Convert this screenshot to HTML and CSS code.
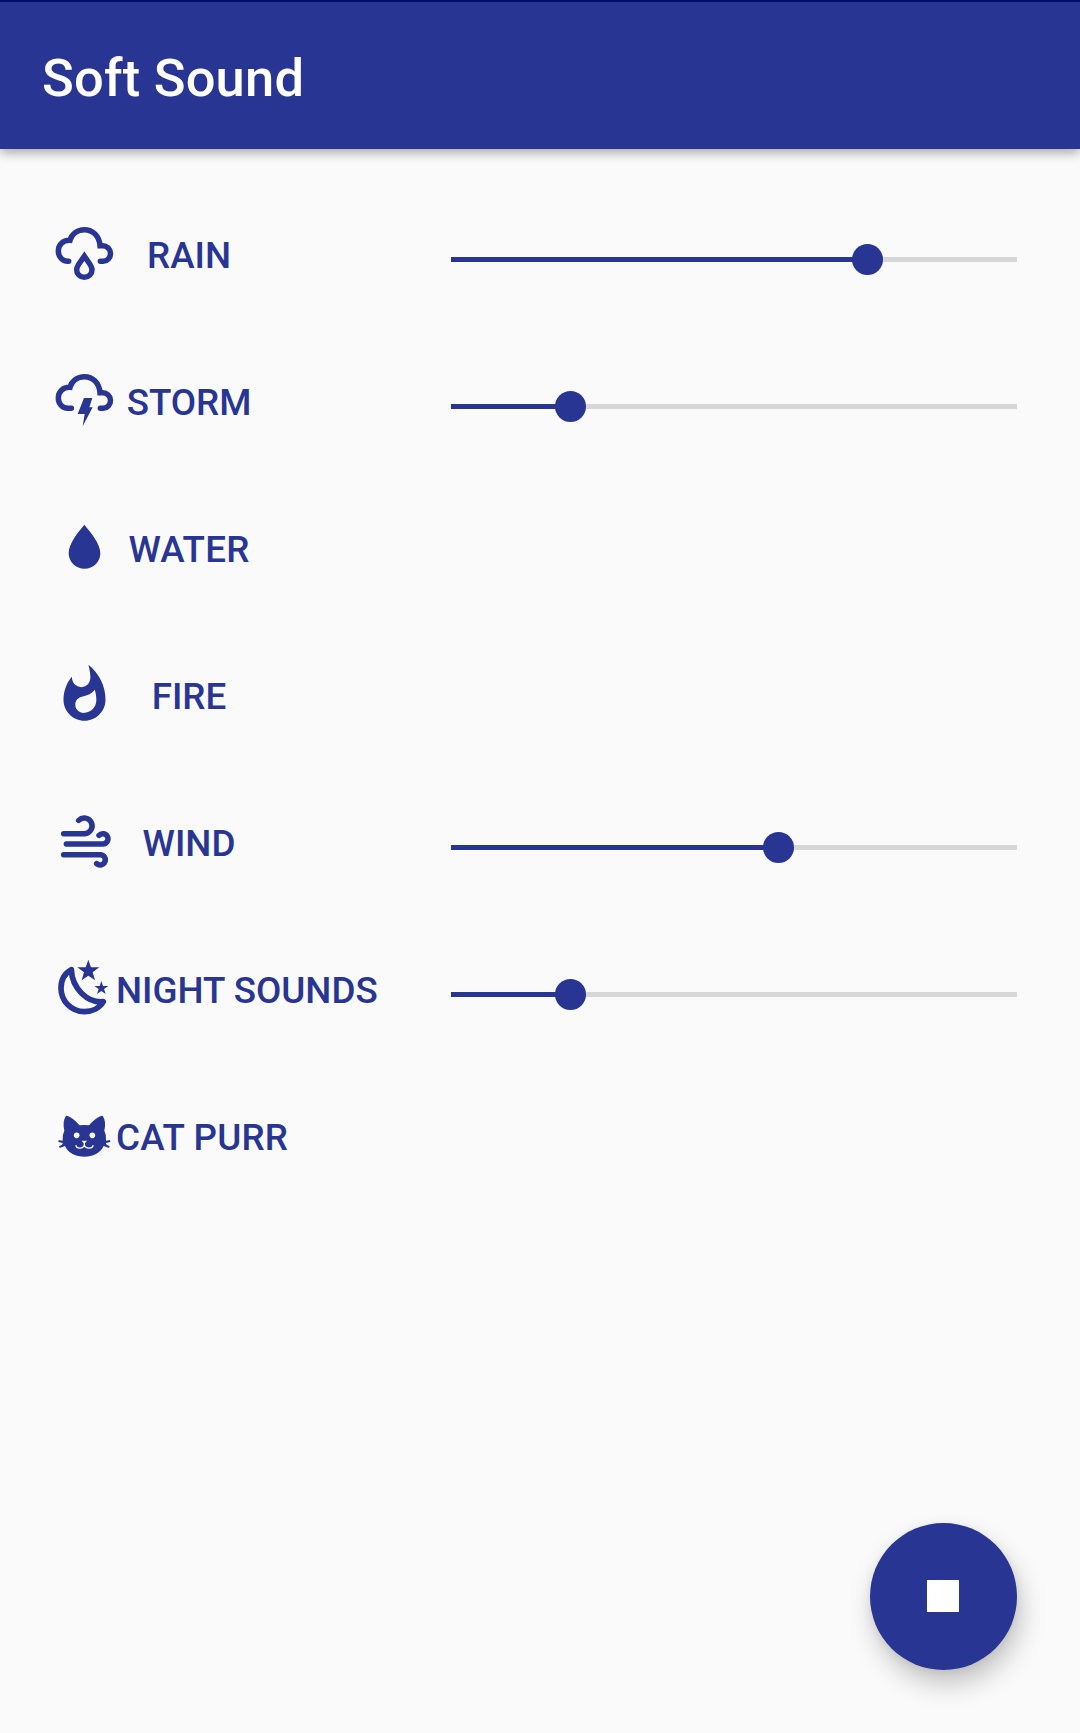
FILE: index.html
```html
<!DOCTYPE html>
<html lang="en">
<head>
<meta charset="utf-8">
<title>Soft Sound</title>
<link rel="stylesheet" href="styles.css">
</head>
<body>
<header class="app-bar"><h1 class="title">Soft Sound</h1></header>
<main class="sounds">
  <section class="row">
    <button class="toggle">
      <svg class="icon" viewBox="39 36 189 189" fill="none" stroke="currentColor" stroke-width="16.5">
        <path stroke-linecap="round" d="M86 154H83C67 154 55 140 55 123C55 104 69 90 90 91C95 72 112 59 133 59C159 59 178 79 180 107H187A23.5 23.5 0 0 1 189 154H181"/>
        <path d="M133 139C124 153 110 166 110 179A23 23 0 0 0 156 179C156 166 142 153 133 139Z"/>
      </svg>
      <span class="label">RAIN</span>
    </button>
    <div class="slider"><div class="fill" style="width:73.6%"></div><div class="thumb"></div></div>
  </section>
  <section class="row">
    <button class="toggle">
      <svg class="icon" viewBox="39 42 189 189" fill="none" stroke="currentColor" stroke-width="16.5">
        <path stroke-linecap="round" d="M94 160H83C67 160 55 146 55 129C55 110 69 96 90 97C95 78 112 65 133 65C159 65 178 85 180 113H187A23.5 23.5 0 0 1 189 160H181"/>
        <path fill="currentColor" stroke="none" d="M132 129H157L148 157H158L128 214L134 177H113Z"/>
      </svg>
      <span class="label">STORM</span>
    </button>
    <div class="slider"><div class="fill" style="width:21.1%"></div><div class="thumb"></div></div>
  </section>
  <section class="row">
    <button class="toggle">
      <svg class="icon" viewBox="39 48 189 189" fill="currentColor">
        <path d="M133 74C113 98 86 131 86 160A47.5 46 0 0 0 181 160C181 131 153 98 133 74Z"/>
      </svg>
      <span class="label wide">WATER</span>
    </button>
  </section>
  <section class="row">
    <button class="toggle">
      <svg class="icon" viewBox="0 0 24 24" fill="currentColor">
        <path d="M13.5.67s.74 2.65.74 4.8c0 2.06-1.35 3.73-3.41 3.73-2.07 0-3.63-1.67-3.63-3.73l.03-.36C5.21 7.51 4 10.62 4 14c0 4.42 3.58 8 8 8s8-3.58 8-8C20 8.61 17.41 3.8 13.5.67zM11.71 19c-1.78 0-3.22-1.4-3.22-3.14 0-1.62 1.05-2.76 2.81-3.12 1.77-.36 3.6-1.21 4.62-2.58.39 1.29.59 2.65.59 4.04 0 2.65-2.15 4.8-4.8 4.8z"/>
      </svg>
      <span class="label">FIRE</span>
    </button>
  </section>
  <section class="row">
    <button class="toggle">
      <svg class="icon" viewBox="39 30 189 189" fill="none" stroke="currentColor" stroke-width="16.5" stroke-linecap="round">
        <path d="M71 101H134A23.5 23.5 0 1 0 116 61M79 132H189A15.5 15.5 0 1 0 177 106M71 164H181A15.5 15.5 0 1 1 170 191"/>
      </svg>
      <span class="label">WIND</span>
    </button>
    <div class="slider"><div class="fill" style="width:57.8%"></div><div class="thumb"></div></div>
  </section>
  <section class="row">
    <button class="toggle">
      <svg class="icon" viewBox="39 51 189 189" fill="currentColor">
        <path fill="none" stroke="currentColor" stroke-width="17" stroke-linejoin="round" d="M94 89C72 101 63 122 63 145A70 70 0 0 0 133 215C157 215 179 204 190 185C144 190 96 146 94 89Z"/>
        <path d="M145 59L153 82H178L158 97L165 121L145 107L125 121L132 97L112 82H137ZM184 123L189 138H205L192 147L197 162L184 153L171 162L176 147L163 138H179Z"/>
      </svg>
      <span class="label">NIGHT SOUNDS</span>
    </button>
    <div class="slider"><div class="fill" style="width:21.1%"></div><div class="thumb"></div></div>
  </section>
  <section class="row">
    <button class="toggle">
      <svg class="icon" viewBox="39 27 189 189" fill="currentColor">
        <path d="M78 62C90 63 108 77 119 91Q133 89 147 91C158 77 176 63 188 62C196 74 197 89 193 107Q200 120 198 137L210 135L211 141L198 144Q197 150 209 153L207 159L191 153C181 175 158 185 133 185S84 175 75 153L59 159L57 153Q69 150 68 144L55 141L56 135L68 137Q66 120 73 107C69 89 70 74 78 62Z"/>
        <g fill="#fafafa"><circle cx="110" cy="121" r="8.5"/><circle cx="157" cy="121" r="8.5"/><path d="M125 137H141L133 147Z"/></g>
        <path fill="none" stroke="#fafafa" stroke-width="4" stroke-linecap="round" d="M133 142V148C133 162 110 163 108 152M133 148C133 162 157 163 159 152"/>
      </svg>
      <span class="label wide">CAT PURR</span>
    </button>
  </section>
</main>
<button class="fab" aria-label="Stop"><span class="stop"></span></button>
</body>
</html>
```
FILE: styles.css
```css
* { box-sizing: border-box; }
body {
  margin: 0;
  height: 1733px;
  display: flex;
  flex-direction: column;
  overflow: hidden;
  background: #fafafa;
  color: #283593;
  font-family: Roboto, sans-serif;
  font-weight: 500;
}
button { border: 0; padding: 0; background: none; color: inherit; font: inherit; }
.app-bar {
  height: 149px;
  padding: 0 42px;
  display: flex;
  align-items: center;
  background: #283593;
  border-top: 2px solid #001064;
  box-shadow: 0 4px 10px rgba(0, 0, 0, .32);
}
.title { margin: 5px 0 0; color: #fff; font-size: 52.5px; line-height: 62px; font-weight: 500; letter-spacing: .2px; }
.sounds { flex: 1; padding: 31px 63px 0 53px; }
.row { height: 147px; display: grid; grid-template-columns: 398px 566px; align-items: center; }
.toggle { display: flex; align-items: center; height: 126px; }
.icon { width: 63px; height: 63px; flex: none; display: block; }
.label { min-width: 146px; font-size: 36.75px; line-height: 44px; text-align: center; white-space: nowrap; padding-top: 4px; }
.wide { letter-spacing: .2px; }
.slider {
  height: 32px;
  display: flex;
  align-items: center;
  margin-top: 12px;
  background: linear-gradient(#d7d7d7, #d7d7d7) center / 100% 5px no-repeat;
}
.fill { height: 5px; background: #283593; }
.thumb { width: 31px; height: 31px; margin-left: -15.5px; border-radius: 50%; background: #283593; }
.fab {
  width: 147px;
  height: 147px;
  margin: 0 63px 63px auto;
  flex: none;
  display: grid;
  place-items: center;
  border-radius: 50%;
  background: #283593;
  box-shadow: 4px 14px 26px rgba(0, 0, 0, .22), 0 2px 10px rgba(0, 0, 0, .07);
}
.stop { width: 32px; height: 32px; margin: 0 1px 1px 0; background: #fff; }
```
